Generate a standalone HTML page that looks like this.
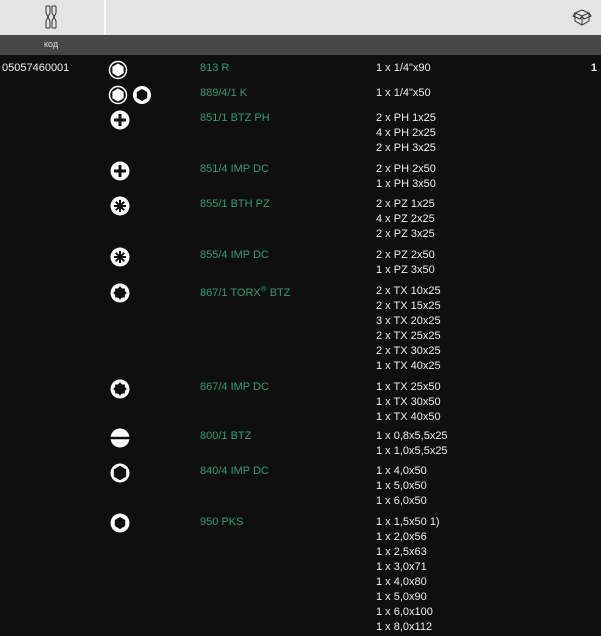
<!DOCTYPE html>
<html><head><meta charset="utf-8"><style>
body{margin:0;width:601px;height:634px;overflow:hidden;background:#0f0f0f;font-family:"Liberation Sans",sans-serif;font-size:11px;position:relative}
.t{position:absolute;line-height:15px;white-space:nowrap;color:#eee}
.g{color:#2f9d78}
.q{position:absolute;left:376px;line-height:15px;color:#eee;white-space:nowrap}
svg.i{position:absolute;width:20px;height:20px}
.w{position:absolute;left:0;top:2px;width:601px;height:634px}
</style></head><body>
<div style="position:absolute;left:0;top:0;width:601px;height:35px;background:#e4e4e4"></div>
<div style="position:absolute;left:104px;top:0;width:2px;height:35px;background:#fff"></div>
<div style="position:absolute;left:0;top:35px;width:601px;height:20px;background:#464646"></div>
<div class="t" style="left:44px;top:37px;font-size:9px;color:#ddd">код</div>
<svg style="position:absolute;left:43px;top:5px" width="16" height="24" viewBox="0 0 16 24" fill="none" stroke="#333" stroke-width="1"><path d="M3 1v7l2 4-2 4v7M7 1v7l-2 4 2 4v7M9 1v7l2 4-2 4v7M13 1v7l-2 4 2 4v7M3 1h4M9 1h4M3 23h4M9 23h4"/></svg>
<svg style="position:absolute;left:572px;top:8px" width="20" height="20" viewBox="0 0 20 20" fill="none" stroke="#333" stroke-width="1"><path d="M10 2l7 3-7 3-7-3zM3 5v8l7 4 7-4V5M10 8v9M3 5l-2 3 7 3 2-3M17 5l2 3-7 3-2-3"/></svg>
<div class="w">
<div class="t" style="left:2px;top:59px">05057460001</div>
<div class="t" style="right:4px;top:59px;font-weight:bold">1</div>

<svg class="i" style="left:108px;top:58px" viewBox="0 0 20 20"><circle cx="10" cy="10" r="8.5" fill="none" stroke="#fff" stroke-width="1.5"/><polygon points="10,3.5 15.6,6.7 15.6,13.3 10,16.5 4.4,13.3 4.4,6.7" fill="#fff"/></svg>
<svg class="i" style="left:108px;top:83px" viewBox="0 0 20 20"><circle cx="10" cy="10" r="8.5" fill="none" stroke="#fff" stroke-width="1.5"/><polygon points="10,3.5 15.6,6.7 15.6,13.3 10,16.5 4.4,13.3 4.4,6.7" fill="#fff"/></svg>
<svg class="i" style="left:132px;top:83px" viewBox="0 0 20 20"><circle cx="10" cy="10" r="9" fill="#fff"/><polygon points="10,4 15.2,7 15.2,13 10,16 4.8,13 4.8,7" fill="#0f0f0f"/></svg>
<svg class="i" style="left:110px;top:108px" viewBox="0 0 20 20"><circle cx="10" cy="10" r="9.5" fill="#fff"/><path d="M10 4v12M4 10h12" stroke="#0f0f0f" stroke-width="3"/></svg>
<svg class="i" style="left:110px;top:159px" viewBox="0 0 20 20"><circle cx="10" cy="10" r="9.5" fill="#fff"/><path d="M10 4v12M4 10h12" stroke="#0f0f0f" stroke-width="3"/></svg>
<svg class="i" style="left:110px;top:194px" viewBox="0 0 20 20"><circle cx="10" cy="10" r="9.5" fill="#fff"/><path d="M10 4v12M4 10h12M5.8 5.8l8.4 8.4M14.2 5.8l-8.4 8.4" stroke="#0f0f0f" stroke-width="2"/></svg>
<svg class="i" style="left:110px;top:245px" viewBox="0 0 20 20"><circle cx="10" cy="10" r="9.5" fill="#fff"/><path d="M10 4v12M4 10h12M5.8 5.8l8.4 8.4M14.2 5.8l-8.4 8.4" stroke="#0f0f0f" stroke-width="2"/></svg>
<svg class="i" style="left:110px;top:281px" viewBox="0 0 20 20"><circle cx="10" cy="10" r="9.5" fill="#fff"/><path d="M10 3Q11.6 6.3 15 5.5Q14 8.5 17 10Q14 11.5 15 14.5Q11.6 13.7 10 17Q8.4 13.7 5 14.5Q6 11.5 3 10Q6 8.5 5 5.5Q8.4 6.3 10 3Z" fill="#0f0f0f"/></svg>
<svg class="i" style="left:110px;top:377px" viewBox="0 0 20 20"><circle cx="10" cy="10" r="9.5" fill="#fff"/><path d="M10 3Q11.6 6.3 15 5.5Q14 8.5 17 10Q14 11.5 15 14.5Q11.6 13.7 10 17Q8.4 13.7 5 14.5Q6 11.5 3 10Q6 8.5 5 5.5Q8.4 6.3 10 3Z" fill="#0f0f0f"/></svg>
<svg class="i" style="left:110px;top:426px" viewBox="0 0 20 20"><circle cx="10" cy="10" r="9.5" fill="#fff"/><path d="M0 10h20" stroke="#0f0f0f" stroke-width="2.5"/></svg>
<svg class="i" style="left:110px;top:461px" viewBox="0 0 20 20"><circle cx="10" cy="10" r="9.5" fill="#fff"/><polygon points="10,2.8 16.2,6.4 16.2,13.6 10,17.2 3.8,13.6 3.8,6.4" fill="#0f0f0f"/></svg>
<svg class="i" style="left:110px;top:511px" viewBox="0 0 20 20"><circle cx="10" cy="10" r="9.5" fill="#fff"/><polygon points="10,4 15.2,7 15.2,13 10,16 4.8,13 4.8,7" fill="#0f0f0f"/></svg>

<div class="t g" style="left:200px;top:59px">813 R</div>
<div class="t g" style="left:200px;top:84px">889/4/1 K</div>
<div class="t g" style="left:200px;top:109px">851/1 BTZ PH</div>
<div class="t g" style="left:200px;top:160px">851/4 IMP DC</div>
<div class="t g" style="left:200px;top:195px">855/1 BTH PZ</div>
<div class="t g" style="left:200px;top:246px">855/4 IMP DC</div>
<div class="t g" style="left:200px;top:284px">867/1 TORX<sup style="font-size:8px;line-height:0">®</sup> BTZ</div>
<div class="t g" style="left:200px;top:378px">867/4 IMP DC</div>
<div class="t g" style="left:200px;top:427px">800/1 BTZ</div>
<div class="t g" style="left:200px;top:462px">840/4 IMP DC</div>
<div class="t g" style="left:200px;top:513px">950 PKS</div>

<div class="q" style="top:59px">1 x 1/4"x90</div>
<div class="q" style="top:84px">1 x 1/4"x50</div>
<div class="q" style="top:109px">2 x PH 1x25<br>4 x PH 2x25<br>2 x PH 3x25</div>
<div class="q" style="top:160px">2 x PH 2x50<br>1 x PH 3x50</div>
<div class="q" style="top:195px">2 x PZ 1x25<br>4 x PZ 2x25<br>2 x PZ 3x25</div>
<div class="q" style="top:246px">2 x PZ 2x50<br>1 x PZ 3x50</div>
<div class="q" style="top:282px">2 x TX 10x25<br>2 x TX 15x25<br>3 x TX 20x25<br>2 x TX 25x25<br>2 x TX 30x25<br>1 x TX 40x25</div>
<div class="q" style="top:378px">1 x TX 25x50<br>1 x TX 30x50<br>1 x TX 40x50</div>
<div class="q" style="top:427px">1 x 0,8x5,5x25<br>1 x 1,0x5,5x25</div>
<div class="q" style="top:462px">1 x 4,0x50<br>1 x 5,0x50<br>1 x 6,0x50</div>
<div class="q" style="top:513px">1 x 1,5x50 1)<br>1 x 2,0x56<br>1 x 2,5x63<br>1 x 3,0x71<br>1 x 4,0x80<br>1 x 5,0x90<br>1 x 6,0x100<br>1 x 8,0x112</div>
</div>
</body></html>
